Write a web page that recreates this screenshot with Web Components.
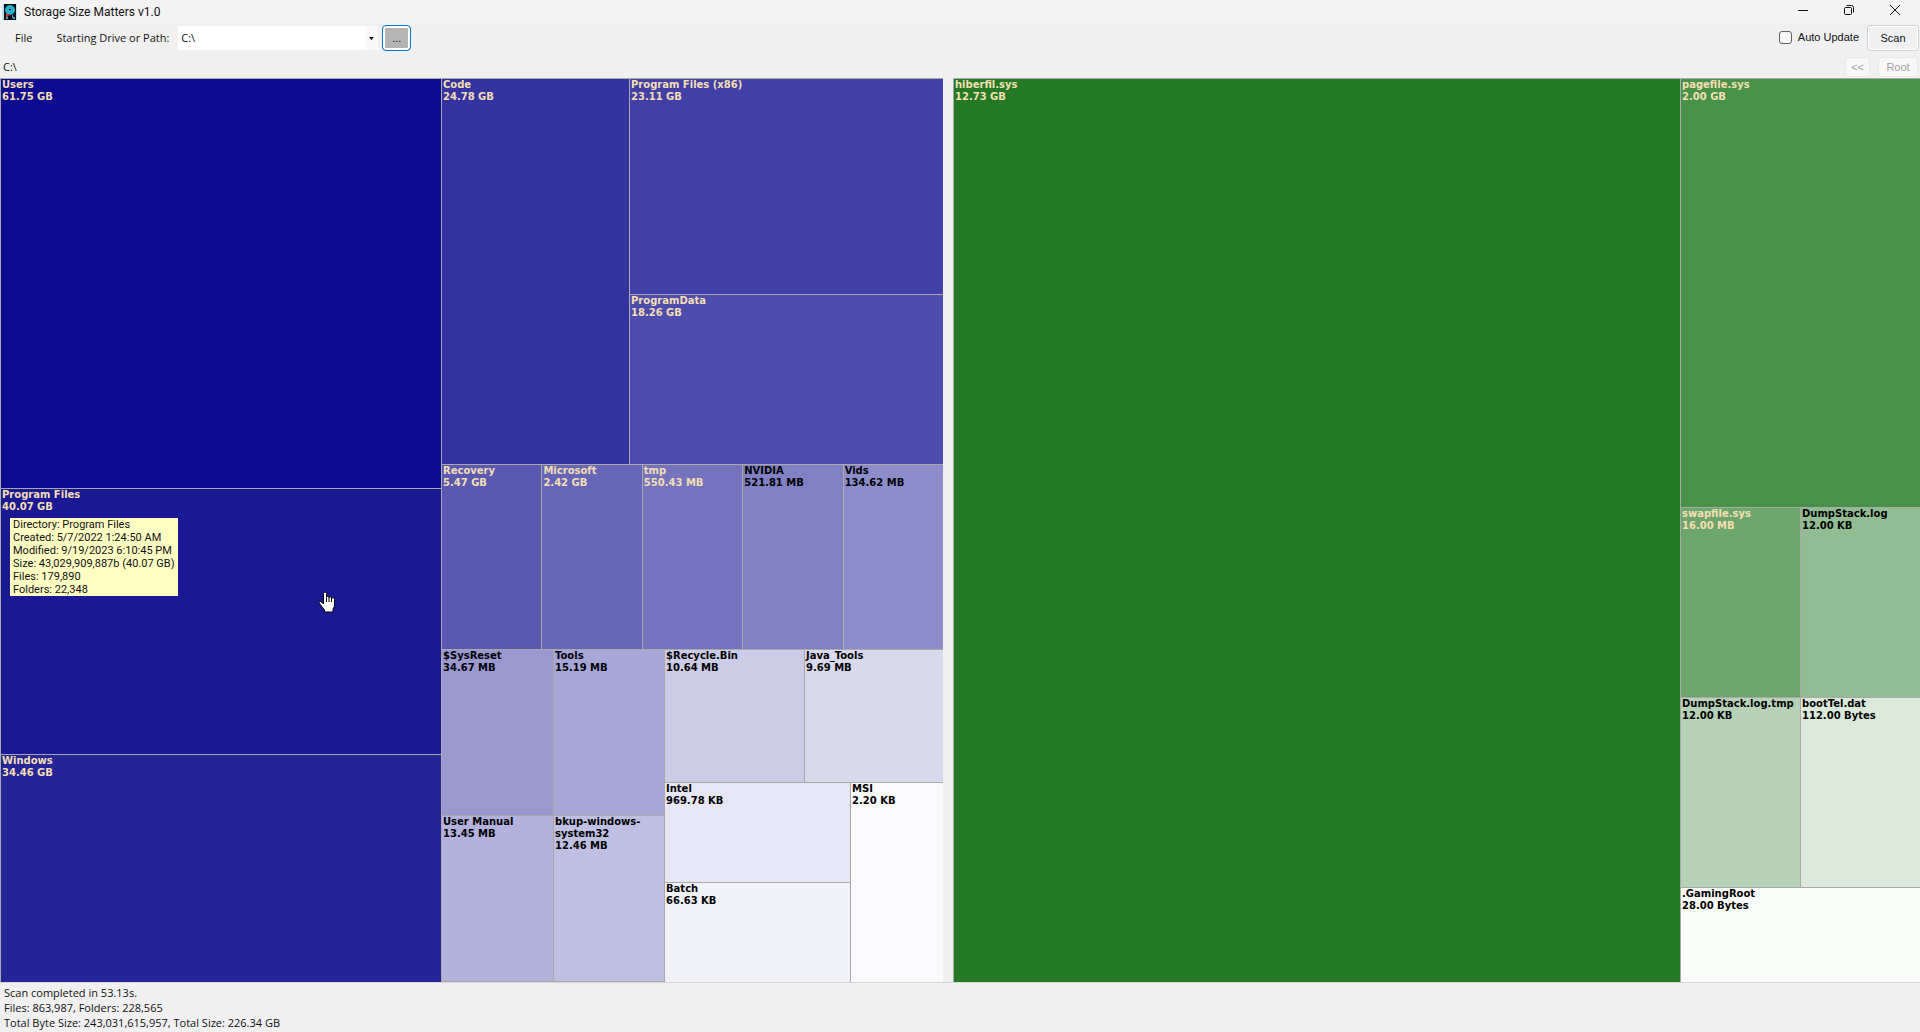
<!DOCTYPE html>
<html lang="en">
<head>
<meta charset="utf-8">
<title>Storage Size Matters v1.0</title>
<style>
html,body{margin:0;height:100%}
body{background:#f0f0f0;overflow:hidden}
</style>
</head>
<body>
<storage-app></storage-app>
<script>
const define = (name, html, setup) => {
  const t = document.createElement('template');
  t.innerHTML = html;
  customElements.define(name, class extends HTMLElement {
    constructor() {
      super();
      this.attachShadow({mode: 'open'}).append(t.content.cloneNode(true));
    }
    connectedCallback() { if (setup) setup(this, this.shadowRoot); }
  });
};

define('title-bar', `
<style>
:host{display:flex;align-items:center;background:#f3f3f3;height:23px;padding-right:2px;font:12px/16px Roboto,sans-serif;color:#111}
.icon{width:15px;height:16px;margin:0 7px 0 2px}
h1{font:inherit;margin:0;flex:1}
button{width:46px;height:20px;border:0;padding:0;background:none;display:grid;place-items:center;align-self:flex-start}
svg{display:block}
</style>
<svg class="icon" viewBox="0 0 15 16"><rect width="15" height="16" fill="#bfe3ee"/><rect x="2" width="12" height="16" fill="#050b12"/><circle cx="8" cy="6" r="5" fill="#27aecb"/><path d="M7 5h2v1H7z" fill="#050b12"/><path d="M4 10h4v1.500H6V13H4z" fill="#d33"/><path d="M4 13h2v2H4zM10 11h1v2h2v2h-2v-1h-1z" fill="#27aecb"/></svg>
<h1><slot></slot></h1>
<button aria-label="Minimize"><svg width="12" height="12" viewBox="0 0 12 12"><path d="M1 6.500h10" stroke="#111"/></svg></button>
<button aria-label="Restore"><svg width="12" height="12" viewBox="0 0 12 12" fill="none" stroke="#111"><rect x="1.500" y="3.500" width="7" height="7" rx="1"/><path d="M3.500 1.500h5a2 2 0 0 1 2 2v5"/></svg></button>
<button aria-label="Close"><svg width="12" height="12" viewBox="0 0 12 12"><path d="M1 1l10 10M11 1L1 11" stroke="#111"/></svg></button>
`);

define('win-button', `
<style>
:host{display:block}
button{font:11px/16px "Liberation Sans",sans-serif;box-sizing:border-box;width:100%;height:100%;padding:0;border:1px solid #d0d0d0;border-radius:4px;background:#fdfdfd;color:#111;display:block}
:host([kind=scan]) button{background:#f0f0f0;box-shadow:inset 0 0 0 1px #fff}
:host([kind=browse]) button{background:#b4b4b4;border:1px solid #0078d4;box-shadow:inset 0 0 0 2px #fff}
button:disabled{color:#a0a0a0;background:#f8f8f8;border-color:#e8e8e8}
</style>
<button><slot></slot></button>
`, (el, root) => { root.querySelector('button').disabled = el.hasAttribute('disabled'); });

define('tool-bar', `
<style>
:host{display:flex;align-items:center;height:30px;padding:0 1px 0 15px;font:11px/16px "Open Sans",sans-serif;color:#111}
.menu{font:inherit;color:inherit;border:0;background:none;padding:0;margin-right:24px}
.combo{display:flex;width:200px;height:24px;background:#fff;margin:0 4px 0 9px;position:relative}
select{appearance:none;flex:1;border:0;padding:0 3px;background:linear-gradient(90deg,#fff 188px,#f9f9f9 188px);font:inherit;color:inherit;outline:0;border-radius:0}
.combo svg{position:absolute;right:4px;top:11px;pointer-events:none}
.browse{width:29px;height:26px}
.gap{flex:1}
input{appearance:none;box-sizing:border-box;width:13px;height:13px;border:1px solid #626262;border-radius:3px;background:#f5f5f5;margin:0 6px 0 0}
.auto{display:flex;align-items:center;padding-bottom:2px;font-family:"Liberation Sans",sans-serif;margin-right:8px}
.scan{width:52px;height:26px}
</style>
<button class="menu">File</button>
<label for="path">Starting Drive or Path:</label>
<div class="combo"><select id="path"><option>C:\\</option></select><svg width="5" height="3"><path d="M0 0h5L2.500 3z" fill="#000"/></svg></div>
<win-button class="browse" kind="browse">...</win-button>
<span class="gap"></span>
<span class="auto"><input type="checkbox" id="auto"><label for="auto">Auto Update</label></span>
<win-button class="scan" kind="scan">Scan</win-button>
`);

define('path-bar', `
<style>
:host{display:flex;align-items:center;gap:8px;box-sizing:border-box;height:25px;padding:3px 2px 0 3px;font:11px/16px "Open Sans",sans-serif;color:#111}
span{flex:1}
.up{width:25px;height:20px}
.root{width:40px;height:20px}
</style>
<span><slot></slot></span>
<win-button class="up" disabled>&lt;&lt;</win-button>
<win-button class="root" disabled>Root</win-button>
`);

// Sizes in the map are proportional: the share is both the basis and the growth factor.
const setShare = el => {
  const share = el.getAttribute('share');
  el.style.flex = share + ' ' + share + ' ' + share + 'px';
};

// A tile of the treemap: name, size, fill colour and share of its parent.
define('map-tile', `
<style>
:host{display:block;box-sizing:border-box;min-width:0;min-height:0;border:solid #a9a9a9;border-width:1px 0 0 1px;padding:0 1px;font:bold 10px/12px "DejaVu Sans",sans-serif;color:#f5deb3;position:relative}
:host([dark]){color:#000}
</style>
<div class="name"></div><div class="size"></div><slot></slot>
`, (el, root) => {
  root.querySelector('.name').textContent = el.getAttribute('name');
  root.querySelector('.size').textContent = el.getAttribute('size');
  el.style.background = el.getAttribute('fill');
  setShare(el);
});

// A row or column that splits its area among its children by share.
define('map-split', `
<style>
:host{display:flex;box-sizing:border-box;min-width:0;min-height:0}
:host([dir=column]){flex-direction:column}
:host([closed]){border-bottom:1px solid #a9a9a9}
</style>
<slot></slot>
`, setShare);

define('info-tip', `
<style>
:host{position:absolute;left:9px;top:29px;z-index:1;background:#ffffc4;color:#111;padding:0 3px;font:11px/13px Roboto,sans-serif;white-space:nowrap}
</style>
<slot></slot>
`);

define('hand-cursor', `
<style>
:host{position:absolute;left:317px;top:102px}
svg{display:block}
</style>
<svg width="18" height="22" viewBox="0 0 18 22"><path d="M5.500 13V2.500a1.500 1.500 0 0 1 3 0V6.500a1.200 1.200 0 0 1 2.500 0v.5a1.200 1.200 0 0 1 2.500 0V8a1.200 1.200 0 0 1 3 .5V15l-1.500 3v3H6.500v-2L1.500 12.500c-1-2 .5-3 2-1.500z" fill="#fff" stroke="#000"/><path d="M8.500 7v4M11 7v4M13.500 8v3" stroke="#000"/></svg>
`);

define('status-bar', `
<style>
:host{display:block;border-top:1px solid #d7d7d7;padding:2px 4px;font:11px/15px "Open Sans",sans-serif;color:#111}
</style>
<slot></slot>
`);

define('storage-app', `
<style>
:host{display:flex;flex-direction:column;height:100vh}
main{flex:1;display:flex;gap:10px;min-height:0}
</style>
<title-bar>Storage Size Matters v1.0</title-bar>
<tool-bar></tool-bar>
<path-bar>C:\\</path-bar>
<main>
<map-split share="943">
  <map-split dir="column" share="441">
    <map-tile name="Users" size="61.75 GB" fill="#0c0c90" share="410"></map-tile>
    <map-tile name="Program Files" size="40.07 GB" fill="#191994" share="266">
      <info-tip><div>Directory: Program Files</div><div>Created: 5/7/2022 1:24:50 AM</div><div>Modified: 9/19/2023 6:10:45 PM</div><div>Size: 43,029,909,887b (40.07 GB)</div><div>Files: 179,890</div><div>Folders: 22,348</div></info-tip>
      <hand-cursor></hand-cursor>
    </map-tile>
    <map-tile name="Windows" size="34.46 GB" fill="#25259a" share="228"></map-tile>
  </map-split>
  <map-split dir="column" share="502">
    <map-split share="386">
      <map-tile name="Code" size="24.78 GB" fill="#3333a1" share="188"></map-tile>
      <map-split dir="column" share="314">
        <map-tile name="Program Files (x86)" size="23.11 GB" fill="#4040a7" share="216"></map-tile>
        <map-tile name="ProgramData" size="18.26 GB" fill="#4d4dad" share="170"></map-tile>
      </map-split>
    </map-split>
    <map-split share="185">
      <map-tile name="Recovery" size="5.47 GB" fill="#5959b2" share="100"></map-tile>
      <map-tile name="Microsoft" size="2.42 GB" fill="#6666b8" share="100"></map-tile>
      <map-tile name="tmp" size="550.43 MB" fill="#7373be" share="100"></map-tile>
      <map-tile dark name="NVIDIA" size="521.81 MB" fill="#8080c4" share="100"></map-tile>
      <map-tile dark name="Vids" size="134.62 MB" fill="#8d8dcb" share="100"></map-tile>
    </map-split>
    <map-split share="333">
      <map-split closed share="223">
        <map-split dir="column" share="112">
          <map-tile dark name="$SysReset" size="34.67 MB" fill="#9999d0" share="166"></map-tile>
          <map-tile dark name="User Manual" size="13.45 MB" fill="#b2b2dc" share="166"></map-tile>
        </map-split>
        <map-split dir="column" share="111">
          <map-tile dark name="Tools" size="15.19 MB" fill="#a6a6d7" share="166"></map-tile>
          <map-tile dark name="bkup-windows-system32" size="12.46 MB" fill="#bfbfe1" share="166"></map-tile>
        </map-split>
      </map-split>
      <map-split dir="column" share="279">
        <map-split share="133">
          <map-tile dark name="$Recycle.Bin" size="10.64 MB" fill="#cccce8" share="140"></map-tile>
          <map-tile dark name="Java_Tools" size="9.69 MB" fill="#d9d9ed" share="139"></map-tile>
        </map-split>
        <map-split share="200">
          <map-split dir="column" share="186">
            <map-tile dark name="Intel" size="969.78 KB" fill="#e6e6f4" share="100"></map-tile>
            <map-tile dark name="Batch" size="66.63 KB" fill="#f1f2f8" share="100"></map-tile>
          </map-split>
          <map-tile dark name="MSI" size="2.20 KB" fill="#fafafd" share="93"></map-tile>
        </map-split>
      </map-split>
    </map-split>
  </map-split>
</map-split>
<map-split share="967">
  <map-tile name="hiberfil.sys" size="12.73 GB" fill="#247924" share="727"></map-tile>
  <map-split dir="column" share="240">
    <map-tile name="pagefile.sys" size="2.00 GB" fill="#489148" share="429"></map-tile>
    <map-split share="190">
      <map-tile name="swapfile.sys" size="16.00 MB" fill="#6da66d" share="120"></map-tile>
      <map-tile dark name="DumpStack.log" size="12.00 KB" fill="#92bc92" share="120"></map-tile>
    </map-split>
    <map-split share="190">
      <map-tile dark name="DumpStack.log.tmp" size="12.00 KB" fill="#b6d2b6" share="120"></map-tile>
      <map-tile dark name="bootTel.dat" size="112.00 Bytes" fill="#dbe9db" share="120"></map-tile>
    </map-split>
    <map-tile dark name=".GamingRoot" size="28.00 Bytes" fill="#fbfdfa" share="95"></map-tile>
  </map-split>
</map-split>
</main>
<status-bar><div>Scan completed in 53.13s.</div><div>Files: 863,987, Folders: 228,565</div><div>Total Byte Size: 243,031,615,957, Total Size: 226.34 GB</div></status-bar>
`);
</script>
</body>
</html>
